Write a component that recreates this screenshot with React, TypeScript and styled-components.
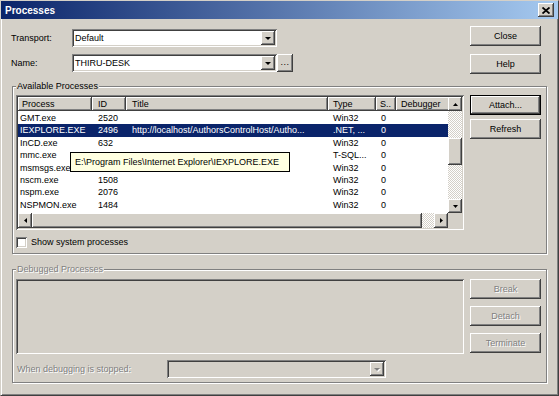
import styled, { createGlobalStyle, css } from "styled-components";

const face = "#d4d0c8";

const GlobalStyle = createGlobalStyle`
  html, body {
    margin: 0;
    padding: 0;
    background: ${face};
  }
  body {
    font-family: "Liberation Sans", Arial, sans-serif;
    font-size: 9px;
    color: #000;
  }
  * {
    box-sizing: border-box;
  }
`;

const raised = css`
  background: ${face};
  box-shadow: inset -1px -1px #404040, inset 1px 1px #ffffff,
    inset -2px -2px #808080, inset 2px 2px ${face};
`;

const sunken = css`
  box-shadow: inset 1px 1px #808080, inset -1px -1px #ffffff,
    inset 2px 2px #404040, inset -2px -2px ${face};
`;

const embossed = css`
  color: #808080;
  text-shadow: 1px 1px #ffffff;
`;

const Window = styled.div`
  width: 559px;
  height: 396px;
  display: flex;
  flex-direction: column;
  background: ${face};
  border: 1px solid;
  border-color: ${face} #404040 #404040 ${face};
  box-shadow: inset 1px 1px #ffffff, inset -1px -1px #808080;
`;

const TitleBar = styled.div`
  height: 18px;
  display: flex;
  align-items: center;
  justify-content: space-between;
  padding: 0 4px;
  background: linear-gradient(to right, #0a246a, #a6caf0);
`;

const TitleText = styled.span`
  color: #fff;
  font-weight: bold;
  font-size: 10px;
`;

const TitleButton = styled.div`
  ${raised};
  width: 16px;
  height: 14px;
  display: flex;
  align-items: center;
  justify-content: center;
`;

const Body = styled.div`
  flex: 1;
  display: flex;
  flex-direction: column;
  padding: 7px 11px 0 9px;
`;

const TopRow = styled.div`
  display: flex;
  justify-content: space-between;
  padding-right: 6px;
`;

const Form = styled.div`
  margin-top: 3px;
  display: flex;
  flex-direction: column;
  gap: 7px;
`;

const FormRow = styled.div`
  display: flex;
  align-items: center;
`;

const FieldLabel = styled.span<{ $width: number; $disabled?: boolean }>`
  width: ${({ $width }) => $width}px;
  padding-left: 1px;
  ${({ $disabled }) => $disabled && embossed};
`;

const Combo = styled.div<{ $width: number; $disabled?: boolean }>`
  ${sunken};
  width: ${({ $width }) => $width}px;
  height: 18px;
  padding: 2px;
  display: flex;
  align-items: center;
  background: ${({ $disabled }) => ($disabled ? face : "#fff")};
`;

const ComboText = styled.span`
  flex: 1;
  padding-left: 1px;
  white-space: nowrap;
  overflow: hidden;
`;

const ArrowButton = styled.div<{ $w: number; $h: number }>`
  ${raised};
  flex: none;
  width: ${({ $w }) => $w}px;
  height: ${({ $h }) => $h}px;
  display: flex;
  align-items: center;
  justify-content: center;
`;

const BrowseButton = styled.div`
  ${raised};
  width: 16px;
  height: 18px;
  display: flex;
  align-items: center;
  justify-content: center;
  letter-spacing: 0.5px;
  padding-bottom: 2px;
`;

const ButtonColumn = styled.div<{ $gap: number }>`
  width: 71px;
  flex: none;
  display: flex;
  flex-direction: column;
  gap: ${({ $gap }) => $gap}px;
`;

const PushButton = styled.div<{ $default?: boolean; $disabled?: boolean }>`
  ${raised};
  height: 20px;
  display: flex;
  align-items: center;
  justify-content: center;
  ${({ $default }) =>
    $default &&
    css`
      border: 1px solid #000;
    `};
  ${({ $disabled }) => $disabled && embossed};
`;

const GroupBox = styled.div<{ $top: number; $padTop: number; $padBottom: number }>`
  position: relative;
  margin: ${({ $top }) => $top}px 0 0 2px;
  border: 1px solid #808080;
  box-shadow: inset 1px 1px #ffffff, 1px 1px #ffffff;
  padding: ${({ $padTop, $padBottom }) => `${$padTop}px 5px ${$padBottom}px 3px`};
`;

const GroupLabel = styled.span<{ $disabled?: boolean }>`
  position: absolute;
  top: -6px;
  left: 3px;
  padding: 0 1px;
  line-height: 11px;
  background: ${face};
  ${({ $disabled }) => $disabled && embossed};
`;

const GroupRow = styled.div`
  display: flex;
  gap: 6px;
`;

const LeftColumn = styled.div`
  width: 448px;
  display: flex;
  flex-direction: column;
`;

const ListView = styled.div`
  ${sunken};
  position: relative;
  height: 135px;
  padding: 2px;
  background: #fff;
  display: grid;
  grid-template-columns: 1fr 14px;
  grid-template-rows: 1fr 15px;
`;

const DataArea = styled.div`
  overflow: hidden;
  white-space: nowrap;
`;

const HeaderRow = styled.div<{ $template: string }>`
  height: 15px;
  display: grid;
  grid-template-columns: ${({ $template }) => $template};
`;

const HeaderCell = styled.div<{ $pad: number }>`
  ${raised};
  height: 14px;
  line-height: 14px;
  padding-left: ${({ $pad }) => $pad}px;
  overflow: hidden;
`;

const Row = styled.div<{ $template: string; $selected?: boolean }>`
  height: 12.4px;
  line-height: 12.4px;
  display: grid;
  grid-template-columns: ${({ $template }) => $template};
  background: ${({ $selected }) => ($selected ? "#0a246a" : "transparent")};
  color: ${({ $selected }) => ($selected ? "#fff" : "#000")};
`;

const Cell = styled.div<{ $pad: number }>`
  padding-left: ${({ $pad }) => $pad}px;
  overflow: hidden;
`;

const VScroll = styled.div`
  display: flex;
  flex-direction: column;
`;

const HScroll = styled.div`
  display: flex;
`;

const Track = styled.div`
  flex: 1;
  display: flex;
  flex-direction: column;
  background: repeating-conic-gradient(${face} 0 25%, #ffffff 0 50%) 0 0 / 2px 2px;
`;

const Thumb = styled.div<{ $offset?: number; $size: number; $horizontal?: boolean }>`
  ${raised};
  flex: none;
  ${({ $horizontal, $size, $offset = 0 }) =>
    $horizontal
      ? css`
          width: ${$size}px;
          height: 15px;
        `
      : css`
          height: ${$size}px;
          margin-top: ${$offset}px;
        `};
`;

const Corner = styled.div`
  background: ${face};
`;

const Tooltip = styled.div`
  position: absolute;
  left: 54px;
  top: 57px;
  width: 220px;
  height: 20px;
  padding-left: 4px;
  line-height: 18px;
  border: 1px solid #000;
  background: #ffffe1;
  white-space: nowrap;
`;

const CheckRow = styled.div`
  margin-top: 6px;
  height: 12px;
  display: flex;
  align-items: center;
  gap: 4px;
`;

const CheckBox = styled.div`
  ${sunken};
  width: 11px;
  height: 11px;
  background: #fff;
`;

const DebugList = styled.div`
  ${sunken};
  width: 448px;
  height: 75px;
  background: ${face};
`;

const BottomRow = styled.div`
  margin-top: 6px;
  display: flex;
  align-items: center;
`;

type Dir = "up" | "down" | "left" | "right";

function Arrow({ dir, w, h, disabled }: { dir: Dir; w: number; h: number; disabled?: boolean }) {
  const points = {
    up: `0,${h} ${w},${h} ${w / 2},0`,
    down: `0,0 ${w},0 ${w / 2},${h}`,
    left: `${w},0 ${w},${h} 0,${h / 2}`,
    right: `0,0 0,${h} ${w},${h / 2}`,
  }[dir];
  return (
    <svg width={w} height={h} viewBox={`0 0 ${w} ${h}`} style={{ overflow: "visible" }}>
      {disabled && <polygon points={points} fill="#fff" transform="translate(1 1)" />}
      <polygon points={points} fill={disabled ? "#808080" : "#000"} />
    </svg>
  );
}

const columns = [
  { title: "Process", width: 74, headPad: 4, cellPad: 2 },
  { title: "ID", width: 34, headPad: 6, cellPad: 6 },
  { title: "Title", width: 202, headPad: 6, cellPad: 6 },
  { title: "Type", width: 48, headPad: 5, cellPad: 5 },
  { title: "S..", width: 20, headPad: 4, cellPad: 5 },
  { title: "Debugger", width: 70, headPad: 5, cellPad: 5 },
];

const template = columns.map((c) => `${c.width}px`).join(" ");

const processes = [
  { name: "GMT.exe", id: "2520", title: "", type: "Win32", s: "0" },
  {
    name: "IEXPLORE.EXE",
    id: "2496",
    title: "http://localhost/AuthorsControlHost/Autho...",
    type: ".NET, ...",
    s: "0",
    selected: true,
  },
  { name: "InCD.exe", id: "632", title: "", type: "Win32", s: "0" },
  { name: "mmc.exe", id: "", title: "", type: "T-SQL...", s: "0" },
  { name: "msmsgs.exe", id: "", title: "", type: "Win32", s: "0" },
  { name: "nscm.exe", id: "1508", title: "", type: "Win32", s: "0" },
  { name: "nspm.exe", id: "2076", title: "", type: "Win32", s: "0" },
  { name: "NSPMON.exe", id: "1484", title: "", type: "Win32", s: "0" },
  { name: "", id: "2108", title: "", type: "Win32", s: "0" },
];

export default function App() {
  return (
    <>
      <GlobalStyle />
      <Window>
        <TitleBar>
          <TitleText>Processes</TitleText>
          <TitleButton>
            <svg width="8" height="7" viewBox="0 0 8 7">
              <path d="M0.5 0.5 L7.5 6.5 M7.5 0.5 L0.5 6.5" stroke="#000" strokeWidth="1.8" />
            </svg>
          </TitleButton>
        </TitleBar>

        <Body>
          <TopRow>
            <Form>
              <FormRow>
                <FieldLabel $width={62}>Transport:</FieldLabel>
                <Combo $width={205}>
                  <ComboText>Default</ComboText>
                  <ArrowButton $w={14} $h={14}>
                    <Arrow dir="down" w={6} h={3} />
                  </ArrowButton>
                </Combo>
              </FormRow>
              <FormRow>
                <FieldLabel $width={62}>Name:</FieldLabel>
                <Combo $width={205}>
                  <ComboText>THIRU-DESK</ComboText>
                  <ArrowButton $w={14} $h={14}>
                    <Arrow dir="down" w={6} h={3} />
                  </ArrowButton>
                </Combo>
                <BrowseButton>...</BrowseButton>
              </FormRow>
            </Form>
            <ButtonColumn $gap={8}>
              <PushButton>Close</PushButton>
              <PushButton>Help</PushButton>
            </ButtonColumn>
          </TopRow>

          <GroupBox $top={12} $padTop={8} $padBottom={5}>
            <GroupLabel>Available Processes</GroupLabel>
            <GroupRow>
              <LeftColumn>
                <ListView>
                  <DataArea>
                    <HeaderRow $template={template}>
                      {columns.map((c) => (
                        <HeaderCell key={c.title} $pad={c.headPad}>
                          {c.title}
                        </HeaderCell>
                      ))}
                    </HeaderRow>
                    {processes.map((p, i) => (
                      <Row key={i} $template={template} $selected={p.selected}>
                        <Cell $pad={columns[0].cellPad}>{p.name}</Cell>
                        <Cell $pad={columns[1].cellPad}>{p.id}</Cell>
                        <Cell $pad={columns[2].cellPad}>{p.title}</Cell>
                        <Cell $pad={columns[3].cellPad}>{p.type}</Cell>
                        <Cell $pad={columns[4].cellPad}>{p.s}</Cell>
                        <Cell $pad={columns[5].cellPad} />
                      </Row>
                    ))}
                  </DataArea>
                  <VScroll>
                    <ArrowButton $w={14} $h={14}>
                      <Arrow dir="up" w={5} h={3} />
                    </ArrowButton>
                    <Track>
                      <Thumb $offset={27} $size={27} />
                    </Track>
                    <ArrowButton $w={14} $h={14}>
                      <Arrow dir="down" w={5} h={3} />
                    </ArrowButton>
                  </VScroll>
                  <HScroll>
                    <ArrowButton $w={14} $h={15}>
                      <Arrow dir="left" w={3} h={5} />
                    </ArrowButton>
                    <Thumb $horizontal $size={390} />
                    <Track />
                    <ArrowButton $w={14} $h={15}>
                      <Arrow dir="right" w={3} h={5} />
                    </ArrowButton>
                  </HScroll>
                  <Corner />
                  <Tooltip>E:\Program Files\Internet Explorer\IEXPLORE.EXE</Tooltip>
                </ListView>
                <CheckRow>
                  <CheckBox />
                  <span>Show system processes</span>
                </CheckRow>
              </LeftColumn>
              <ButtonColumn $gap={4}>
                <PushButton $default>Attach...</PushButton>
                <PushButton>Refresh</PushButton>
              </ButtonColumn>
            </GroupRow>
          </GroupBox>

          <GroupBox $top={15} $padTop={9} $padBottom={4}>
            <GroupLabel $disabled>Debugged Processes</GroupLabel>
            <GroupRow>
              <DebugList />
              <ButtonColumn $gap={7}>
                <PushButton $disabled>Break</PushButton>
                <PushButton $disabled>Detach</PushButton>
                <PushButton $disabled>Terminate</PushButton>
              </ButtonColumn>
            </GroupRow>
            <BottomRow>
              <FieldLabel $width={151} $disabled>
                When debugging is stopped:
              </FieldLabel>
              <Combo $width={219} $disabled>
                <ComboText />
                <ArrowButton $w={14} $h={14}>
                  <Arrow dir="down" w={6} h={3} disabled />
                </ArrowButton>
              </Combo>
            </BottomRow>
          </GroupBox>
        </Body>
      </Window>
    </>
  );
}
